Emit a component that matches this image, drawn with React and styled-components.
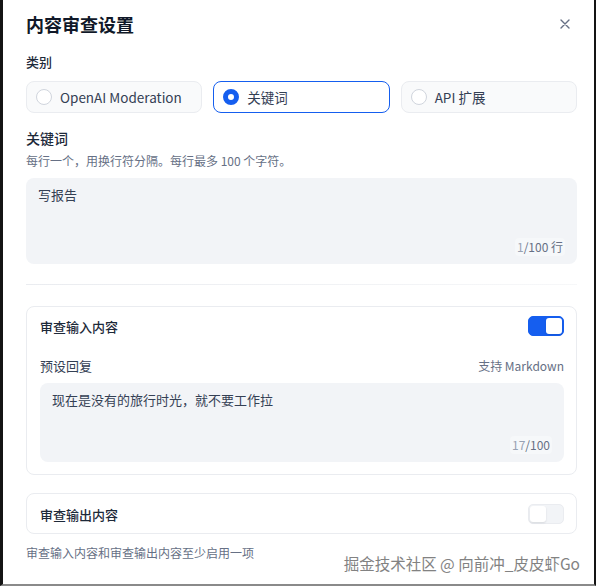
import React from 'react'
import styled, { createGlobalStyle } from 'styled-components'

const GlobalStyle = createGlobalStyle`
  html, body {
    margin: 0;
    padding: 0;
    background: #fff;
  }
  body {
    font-family: "Noto Sans CJK SC", "Noto Sans", "Liberation Sans", sans-serif;
    color: #344054;
  }
`

const Frame = styled.div`
  position: relative;
  width: 596px;
  height: 586px;
  box-sizing: border-box;
  border-left: 3px solid #141414;
  border-right: 2px solid #141414;
  border-bottom: 2px solid #8a8a8a;
  padding: 10px 17px 0 23px;
  background: #fff;
  overflow: hidden;
`

const Header = styled.div`
  display: flex;
  align-items: center;
  justify-content: space-between;
  height: 28px;
`

const Title = styled.h1`
  margin: 0;
  font-size: 18px;
  line-height: 28px;
  font-weight: 700;
  color: #101828;
`

const Close = styled.button`
  border: none;
  background: none;
  padding: 0;
  width: 16px;
  height: 16px;
  margin-right: 4px;
  display: flex;
  align-items: center;
  justify-content: center;
  color: #667085;
`

const Label = styled.div`
  margin-top: ${p => p.$mt || 0}px;
  font-size: ${p => p.$size || 13}px;
  line-height: 20px;
  font-weight: 500;
  color: #1d2939;
`

const Hint = styled.div`
  margin-top: ${p => p.$mt || 0}px;
  font-size: 12px;
  line-height: 18px;
  color: #667085;
`

const RadioRow = styled.div`
  margin-top: 9px;
  display: grid;
  grid-template-columns: repeat(3, 1fr);
  gap: 11px;
`

const RadioCard = styled.div`
  height: 32px;
  box-sizing: border-box;
  display: flex;
  align-items: center;
  gap: 8px;
  padding: 0 9px;
  border-radius: 8px;
  border: 1px solid ${p => (p.$active ? '#155eef' : '#eaecf0')};
  background: ${p => (p.$active ? '#fff' : '#f9fafb')};
  font-size: 13.5px;
  color: #344054;
`

const RadioDot = styled.span`
  width: 16px;
  height: 16px;
  box-sizing: border-box;
  border-radius: 50%;
  background: #fff;
  border: ${p => (p.$active ? '5px solid #155eef' : '1px solid #d0d5dd')};
  flex-shrink: 0;
`

const TextBox = styled.div`
  margin-top: ${p => p.$mt || 0}px;
  height: ${p => p.$h}px;
  box-sizing: border-box;
  background: #f2f4f7;
  border-radius: 8px;
  padding: 7px 12px 8px 12px;
  display: flex;
  flex-direction: column;
  justify-content: space-between;
`

const BoxText = styled.div`
  font-size: 13px;
  line-height: 20px;
  color: #344054;
`

const Counter = styled.div`
  align-self: flex-end;
  font-size: 12px;
  line-height: 18px;
  color: #667085;
  background: rgba(255, 255, 255, 0.35);
  padding: 0 2px;
  border-radius: 4px;

  span {
    color: #98a2b3;
  }
`

const Divider = styled.div`
  margin-top: 20px;
  height: 1px;
  background: linear-gradient(90deg, #eaecf0, rgba(234, 236, 240, 0.4));
`

const Section = styled.div`
  margin-top: ${p => p.$mt}px;
  border: 1px solid #eaecf0;
  border-radius: 8px;
  padding: ${p => (p.$open ? '9px 12px 12px 13px' : '10px 12px 9px 13px')};
`

const SectionHead = styled.div`
  display: flex;
  align-items: center;
  justify-content: space-between;
  height: 20px;
  font-size: 13px;
  font-weight: 500;
  color: #1d2939;
`

const Switch = styled.div`
  position: relative;
  width: 36px;
  height: 20px;
  box-sizing: border-box;
  border-radius: 5px;
  background: ${p => (p.$on ? '#155eef' : '#f2f4f7')};
  border: 1px solid ${p => (p.$on ? '#155eef' : '#eaecf0')};

  &::after {
    content: '';
    position: absolute;
    top: 1px;
    left: ${p => (p.$on ? '17px' : '1px')};
    width: 16px;
    height: 16px;
    border-radius: 3px;
    background: #fff;
    box-shadow: 0 1px 2px rgba(16, 24, 40, 0.12);
  }
`

const FieldHead = styled.div`
  margin-top: 20px;
  display: flex;
  justify-content: space-between;
  font-size: 13px;
  line-height: 20px;
  color: #344054;
`

const FieldNote = styled.span`
  font-size: 12px;
  color: #667085;
`

const Watermark = styled.div`
  position: absolute;
  right: 14px;
  bottom: 10px;
  font-size: 15.5px;
  line-height: 22px;
  color: #6d6d6d;
  opacity: 0.85;
  white-space: nowrap;
`

const categories = [
  { key: 'openai', label: 'OpenAI Moderation' },
  { key: 'keywords', label: '关键词' },
  { key: 'api', label: 'API 扩展' }
]

export default function App() {
  const selected = 'keywords'
  return (
    <>
      <GlobalStyle />
      <Frame>
        <Header>
          <Title>内容审查设置</Title>
          <Close aria-label="close">
            <svg width="12" height="12" viewBox="0 0 12 12" fill="none">
              <path d="M2 2L10 10M10 2L2 10" stroke="currentColor" strokeWidth="1.4" strokeLinecap="round" />
            </svg>
          </Close>
        </Header>

        <Label $mt={14}>类别</Label>
        <RadioRow>
          {categories.map(c => (
            <RadioCard key={c.key} $active={c.key === selected}>
              <RadioDot $active={c.key === selected} />
              {c.label}
            </RadioCard>
          ))}
        </RadioRow>

        <Label $mt={15} $size={14}>关键词</Label>
        <Hint $mt={4}>每行一个，用换行符分隔。每行最多 100 个字符。</Hint>
        <TextBox $mt={8} $h={86}>
          <BoxText>写报告</BoxText>
          <Counter><span>1</span>/100 行</Counter>
        </TextBox>

        <Divider />

        <Section $mt={21} $open>
          <SectionHead>
            审查输入内容
            <Switch $on />
          </SectionHead>
          <FieldHead>
            预设回复
            <FieldNote>支持 Markdown</FieldNote>
          </FieldHead>
          <TextBox $mt={7} $h={79}>
            <BoxText>现在是没有的旅行时光，就不要工作拉</BoxText>
            <Counter><span>17</span>/100</Counter>
          </TextBox>
        </Section>

        <Section $mt={18}>
          <SectionHead>
            审查输出内容
            <Switch />
          </SectionHead>
        </Section>

        <Hint $mt={10}>审查输入内容和审查输出内容至少启用一项</Hint>

        <Watermark>掘金技术社区 @ 向前冲_皮皮虾Go</Watermark>
      </Frame>
    </>
  )
}
